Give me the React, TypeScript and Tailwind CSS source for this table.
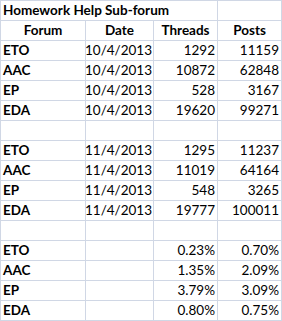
import React from "react";

type Row = [string, string, string, string] | null;

const rows: Row[] = [
  ["ETO", "10/4/2013", "1292", "11159"],
  ["AAC", "10/4/2013", "10872", "62848"],
  ["EP", "10/4/2013", "528", "3167"],
  ["EDA", "10/4/2013", "19620", "99271"],
  null,
  ["ETO", "11/4/2013", "1295", "11237"],
  ["AAC", "11/4/2013", "11019", "64164"],
  ["EP", "11/4/2013", "548", "3265"],
  ["EDA", "11/4/2013", "19777", "100011"],
  null,
  ["ETO", "", "0.23%", "0.70%"],
  ["AAC", "", "1.35%", "2.09%"],
  ["EP", "", "3.79%", "3.09%"],
  ["EDA", "", "0.80%", "0.75%"],
];

const cell =
  "h-[20px] border-l border-t border-[#d0d7e5] flex items-end pb-[1px] leading-[17px] whitespace-nowrap overflow-hidden";

export default function App() {
  return (
    <div
      className="w-[282px] bg-white text-black text-[13.5px] grid grid-cols-[85px_68px_64px_64px] border-r border-b border-[#d0d7e5]"
      style={{ fontFamily: "Lato, 'Open Sans', sans-serif" }}
    >
      <div className={`${cell} col-span-3 font-bold pl-[2px]`}>Homework Help Sub-forum</div>
      <div className={cell}></div>

      <div className={`${cell} font-bold justify-center`}>Forum</div>
      <div className={`${cell} font-bold justify-center`}>Date</div>
      <div className={`${cell} font-bold justify-center`}>Threads</div>
      <div className={`${cell} font-bold justify-center`}>Posts</div>

      {rows.map((r, i) =>
        r ? (
          <React.Fragment key={i}>
            <div className={`${cell} font-bold pl-[2px]`}>{r[0]}</div>
            <div className={`${cell} justify-end pr-[1px]`}>{r[1]}</div>
            <div className={`${cell} justify-end pr-[2px]`}>{r[2]}</div>
            <div className={`${cell} justify-end pr-[2px]`}>{r[3]}</div>
          </React.Fragment>
        ) : (
          <React.Fragment key={i}>
            <div className={cell}></div>
            <div className={cell}></div>
            <div className={cell}></div>
            <div className={cell}></div>
          </React.Fragment>
        )
      )}
    </div>
  );
}
